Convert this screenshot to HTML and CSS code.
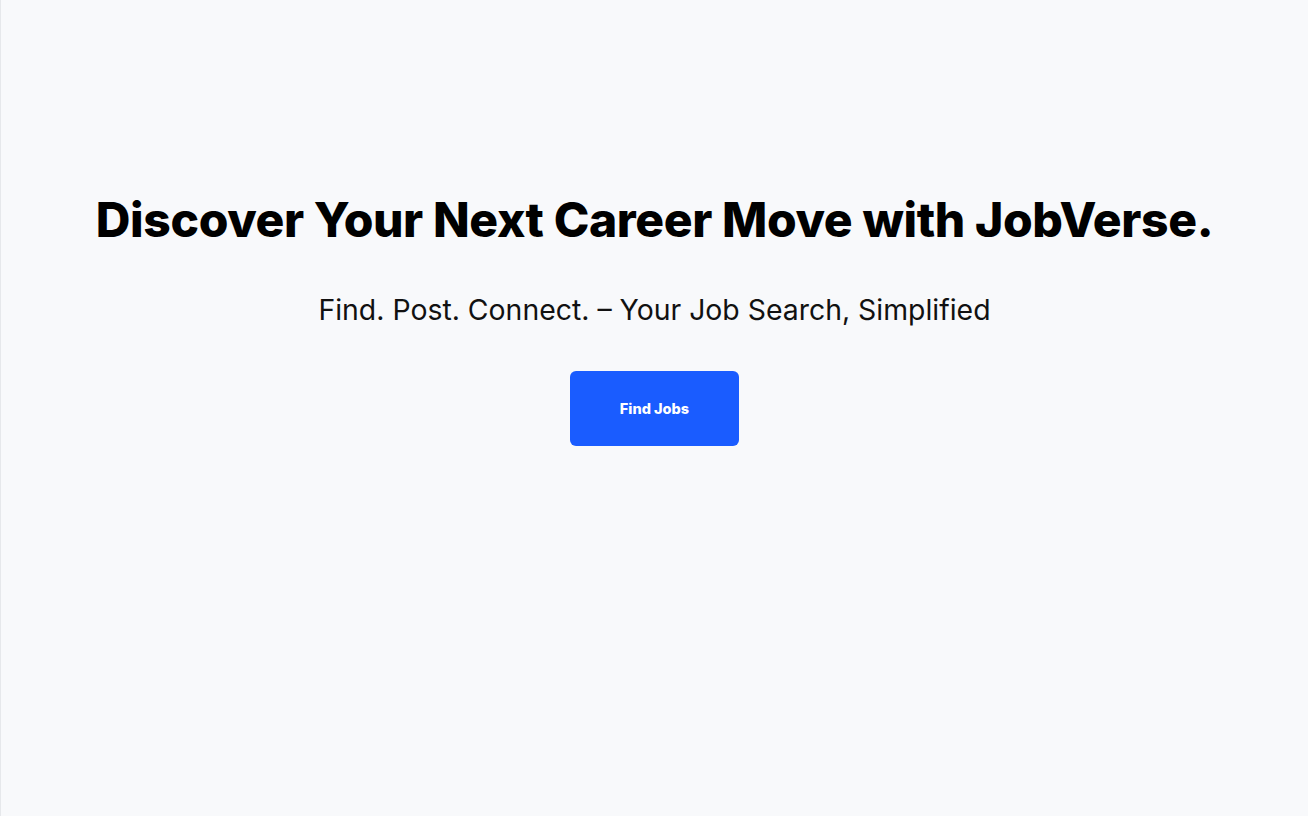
FILE: index.html
```html
<!DOCTYPE html>
<html lang="en">
<head>
<meta charset="utf-8">
<title>JobVerse</title>
<link rel="stylesheet" href="styles.css">
</head>
<body>
<main class="hero">
  <h1 class="hero-title">Discover Your Next Career Move with JobVerse.</h1>
  <p class="hero-sub">Find. Post. Connect. – Your Job Search, Simplified</p>
  <button class="hero-btn" type="button">Find Jobs</button>
</main>
</body>
</html>
```
FILE: styles.css
```css
html, body {
  margin: 0;
  padding: 0;
  height: 100%;
}
body {
  background: #f8f9fb;
  font-family: Inter, "Noto Sans", sans-serif;
  color: #111;
  border-left: 1px solid #e6e8eb;
  box-sizing: border-box;
}
.hero {
  display: flex;
  flex-direction: column;
  align-items: center;
  padding-top: 190px;
  text-align: center;
}
.hero-title {
  margin: 0;
  font-size: 48px;
  font-weight: 800;
  letter-spacing: -0.38px;
  line-height: 60px;
  color: #000;
}
.hero-sub {
  margin: 42px 0 0;
  font-size: 28.4px;
  font-weight: 400;
  line-height: 36px;
  color: #111;
}
.hero-btn {
  margin-top: 43px;
  width: 169px;
  height: 75px;
  border: none;
  border-radius: 6px;
  background: #1a5cff;
  color: #fff;
  font-family: Inter, "Noto Sans", sans-serif;
  font-size: 14.5px;
  font-weight: 800;
  cursor: pointer;
}
```
